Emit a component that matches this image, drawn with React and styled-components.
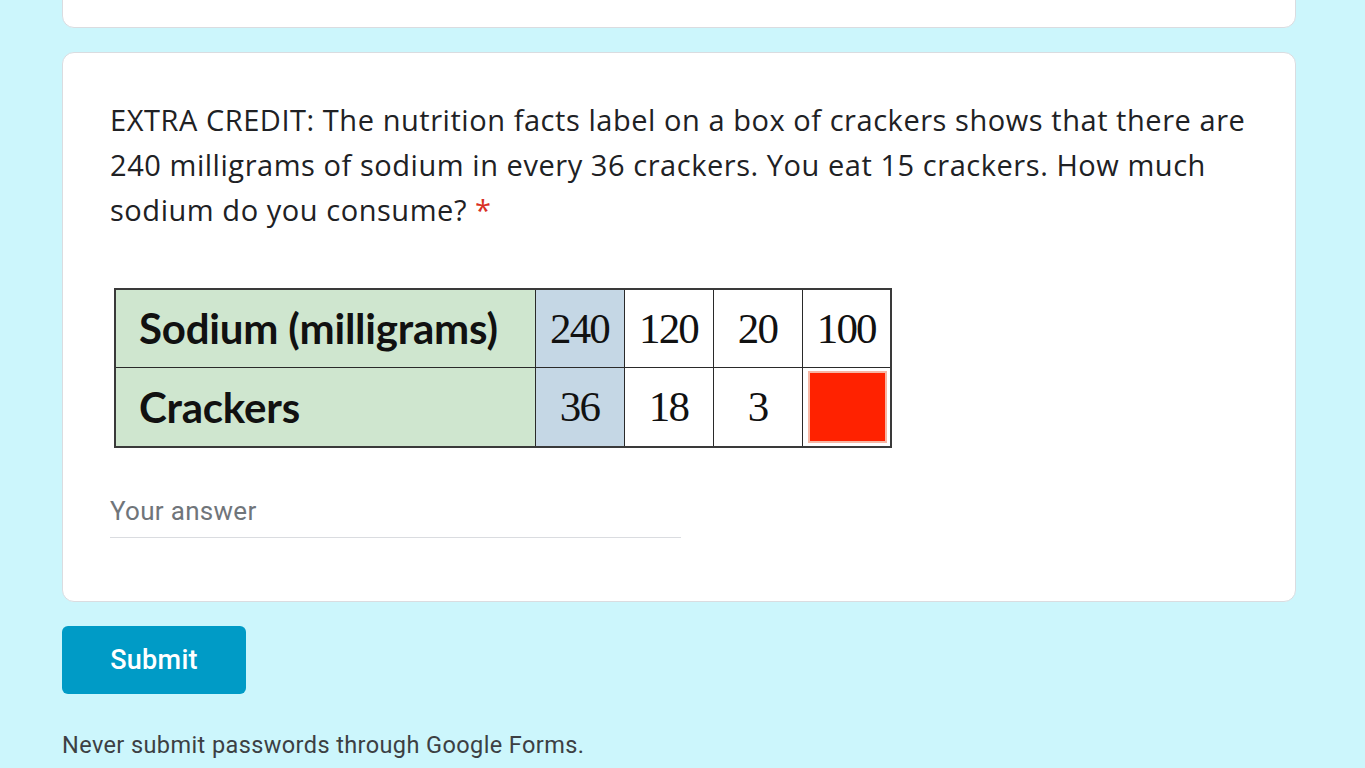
import React from "react";
import styled, { createGlobalStyle } from "styled-components";

const GlobalStyle = createGlobalStyle`
  html, body {
    margin: 0;
    padding: 0;
    background: #ccf6fc;
  }
  body {
    font-family: "Roboto", "Liberation Sans", sans-serif;
  }
`;

const Page = styled.div`
  width: 1234px;
  margin-left: 62px;
  height: 793px;
  overflow: hidden;
  display: flex;
  flex-direction: column;
  margin-top: -25px;
`;

const Card = styled.div`
  flex-shrink: 0;
  background: #fff;
  border: 1px solid #dadce0;
  border-radius: 12px;
  box-sizing: border-box;
  padding: ${(p) => p.$padding || "0"};
  height: ${(p) => p.$height || "auto"};
  margin-bottom: 24px;
`;

const Question = styled.div`
  font-family: "Open Sans", "Liberation Sans", sans-serif;
  font-size: 29px;
  line-height: 45px;
  color: #202124;
  letter-spacing: 0.55px;
`;

const Star = styled.span`
  color: #d93025;
`;

const Ratio = styled.table`
  margin: 56px 0 0 4px;
  border-collapse: collapse;
  border: 2px solid #3a3a3a;
`;

const Cell = styled.td`
  height: 78px;
  width: ${(p) => p.$w || 89}px;
  box-sizing: border-box;
  border: 1px solid #2a2a2a;
  background: ${(p) => p.$bg || "#fff"};
  padding: 0;
  text-align: ${(p) => (p.$label ? "left" : "center")};
  padding-left: ${(p) => (p.$label ? "23px" : "0")};
  font-family: ${(p) =>
    p.$label
      ? '"Lato", "Liberation Sans", sans-serif'
      : '"Liberation Serif", serif'};
  font-weight: ${(p) => (p.$label ? 700 : 400)};
  font-size: ${(p) => (p.$label ? "42px" : "43px")};
  color: #111;
  letter-spacing: ${(p) => (p.$label ? "-0.2px" : "-1.8px")};
`;

const Blank = styled.div`
  margin: 3px 3px 3px 5px;
  height: 68px;
  background: #ff2200;
  border: 2px solid #f7b6a4;
`;

const Answer = styled.div`
  margin-top: 48px;
  width: 571px;
  border-bottom: 1px solid #dadce0;
  padding-bottom: 11px;
  font-family: "Roboto", sans-serif;
  font-size: 26px;
  color: #70757a;
  letter-spacing: 0.3px;
`;

const SubmitButton = styled.button`
  flex-shrink: 0;
  width: 184px;
  height: 68px;
  border: none;
  border-radius: 6px;
  background: #009bc6;
  color: #fff;
  font-family: "Roboto", sans-serif;
  font-weight: 500;
  font-size: 27px;
  letter-spacing: 0.3px;
  margin-top: 0;
`;

const Footer = styled.div`
  margin-top: 37px;
  font-family: "Roboto", sans-serif;
  font-size: 23.5px;
  color: #3c4043;
  letter-spacing: 0.4px;
`;

export default function App() {
  const top = [240, 120, 20, 100];
  const bottom = [36, 18, 3];
  return (
    <>
      <GlobalStyle />
      <Page>
        <Card $height="53px" />
        <Card $padding="44px 47px 62px" $height="550px">
          <Question>
            EXTRA CREDIT: The nutrition facts label on a box of crackers shows that there are 240 milligrams of sodium in every 36 crackers. You eat 15 crackers. How much sodium do you consume? <Star>*</Star>
          </Question>
          <Ratio>
            <tbody>
              <tr>
                <Cell $label $w={420} $bg="#cfe6cf">Sodium (milligrams)</Cell>
                {top.map((v, i) => (
                  <Cell key={v} $bg={i === 0 ? "#c5d7e5" : "#fff"}>{v}</Cell>
                ))}
              </tr>
              <tr>
                <Cell $label $w={420} $bg="#cfe6cf">Crackers</Cell>
                {bottom.map((v, i) => (
                  <Cell key={v} $bg={i === 0 ? "#c5d7e5" : "#fff"}>{v}</Cell>
                ))}
                <Cell>
                  <Blank />
                </Cell>
              </tr>
            </tbody>
          </Ratio>
          <Answer>Your answer</Answer>
        </Card>
        <SubmitButton>Submit</SubmitButton>
        <Footer>Never submit passwords through Google Forms.</Footer>
      </Page>
    </>
  );
}
